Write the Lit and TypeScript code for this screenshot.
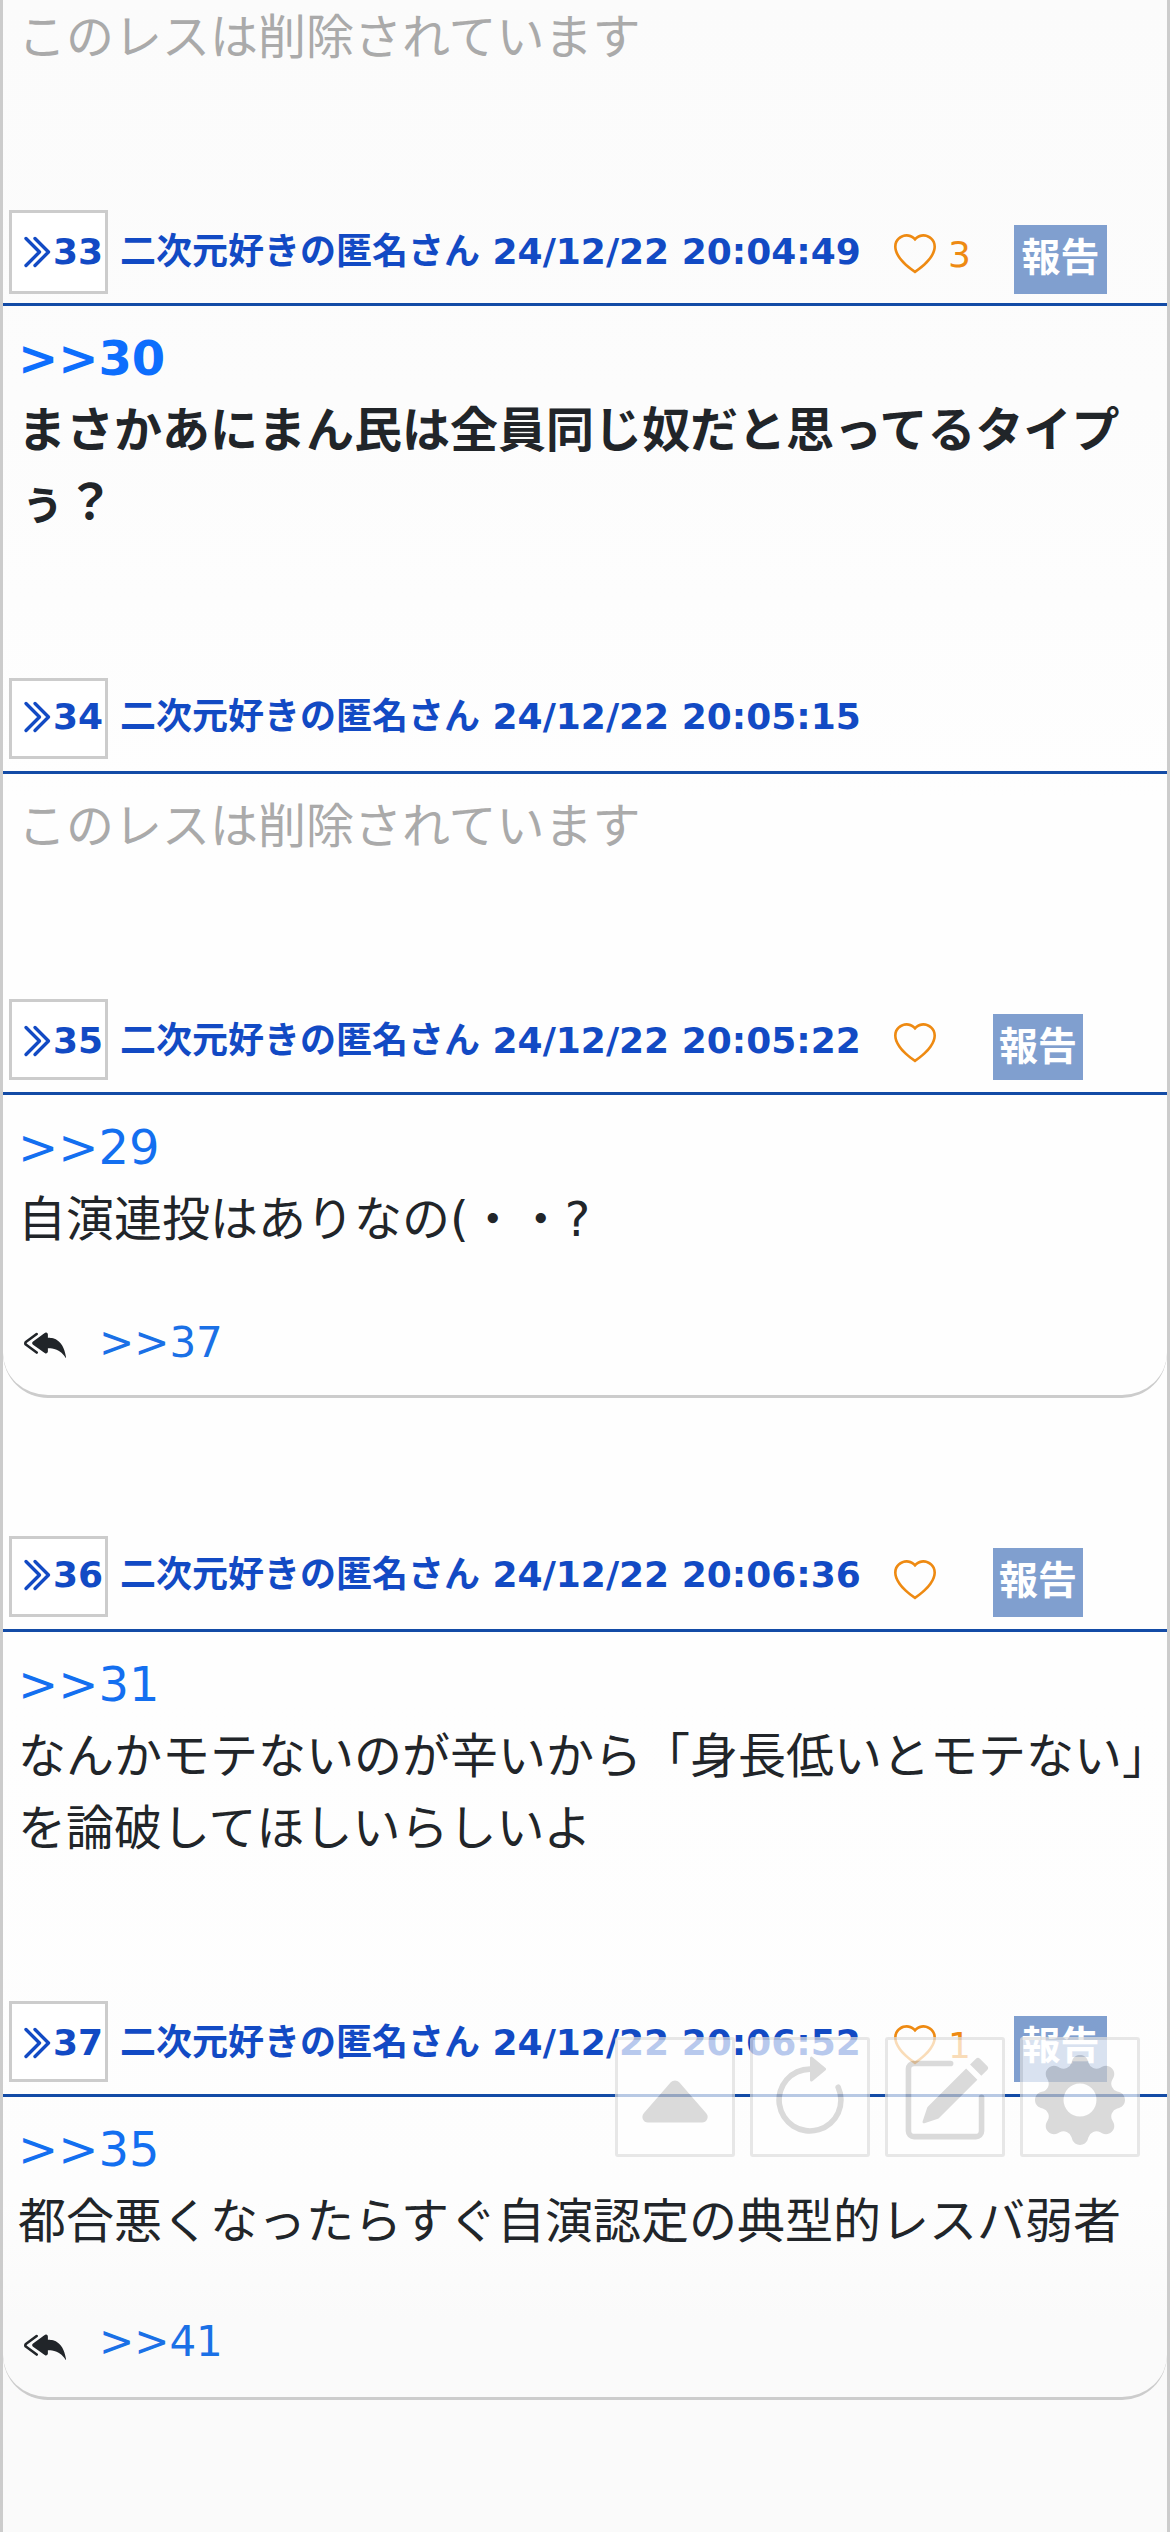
import { LitElement, html, css, svg, nothing } from "lit";
import { customElement, property } from "lit/decorators.js";
import { classMap } from "lit/directives/class-map.js";

interface Post {
  no?: number;
  time?: string;
  likes?: number;
  report?: boolean;
  bold?: boolean;
  deleted?: boolean;
  quote?: string;
  lines: string[];
  reply?: string;
  variant?: string;
}

const AUTHOR = "二次元好きの匿名さん";
const DELETED = "このレスは削除されています";

const POSTS: Post[] = [
  { deleted: true, lines: [DELETED], variant: "cut" },
  {
    no: 33,
    time: "24/12/22 20:04:49",
    likes: 3,
    report: true,
    bold: true,
    quote: ">>30",
    lines: ["まさかあにまん民は全員同じ奴だと思ってるタイプ", "ぅ？"],
    variant: "tall",
  },
  { no: 34, time: "24/12/22 20:05:15", deleted: true, lines: [DELETED], variant: "raised" },
  {
    no: 35,
    time: "24/12/22 20:05:22",
    likes: 0,
    report: true,
    quote: ">>29",
    lines: ["自演連投はありなの(・・?"],
    reply: ">>37",
    variant: "plain",
  },
  {
    no: 36,
    time: "24/12/22 20:06:36",
    likes: 0,
    report: true,
    quote: ">>31",
    lines: ["なんかモテないのが辛いから「身長低いとモテない」", "を論破してほしいらしいよ"],
    variant: "raised",
  },
  {
    no: 37,
    time: "24/12/22 20:06:52",
    likes: 1,
    report: true,
    quote: ">>35",
    lines: ["都合悪くなったらすぐ自演認定の典型的レスバ弱者"],
    reply: ">>41",
    variant: "snug",
  },
];

const chevrons = svg`<path d="M4 2l6 6-6 6M8 2l6 6-6 6" fill="none" stroke="currentColor" stroke-width="1.5" stroke-linecap="round" stroke-linejoin="round"/>`;
const heart = svg`<path d="m8 2.748-.717-.737C5.6.281 2.514.878 1.4 3.053c-.523 1.023-.641 2.5.314 4.385.92 1.815 2.834 3.989 6.286 6.357 3.452-2.368 5.365-4.542 6.286-6.357.955-1.886.838-3.362.314-4.385C13.486.878 10.4.28 8.717 2.01zM8 15C-7.333 4.868 3.279-3.04 7.824 1.143q.09.083.176.171a3 3 0 0 1 .176-.17C12.72-3.042 23.333 4.867 8 15"/>`;
const replyAll = svg`<path d="M8.021 11.9 3.453 8.62a.72.72 0 0 1 0-1.238L8.021 4.1a.716.716 0 0 1 1.079.619V6c1.5 0 6 0 7 8-2.5-4.5-7-4-7-4v1.281c0 .56-.606.898-1.079.62z"/><path d="M5.232 4.293a.5.5 0 0 1-.106.7L1.114 7.945l-.042.028a.147.147 0 0 0 0 .252l.042.028 4.012 2.954a.5.5 0 1 1-.593.805L.539 9.073a1.147 1.147 0 0 1 0-1.946l3.994-2.94a.5.5 0 0 1 .699.106"/>`;

const TOOLS = [
  svg`<path d="m7.247 4.86-4.796 5.481c-.566.647-.106 1.659.753 1.659h9.592a1 1 0 0 0 .753-1.659l-4.796-5.48a1 1 0 0 0-1.506 0z"/>`,
  svg`<path fill-rule="evenodd" d="M8 3a5 5 0 1 0 4.546 2.914.5.5 0 0 1 .908-.417A6 6 0 1 1 8 2z"/><path d="M8 4.466V.534a.25.25 0 0 1 .41-.192l2.36 1.966c.12.1.12.284 0 .384L8.41 4.658A.25.25 0 0 1 8 4.466"/>`,
  svg`<path d="M15.502 1.94a.5.5 0 0 1 0 .706L14.459 3.69l-2-2L13.502.646a.5.5 0 0 1 .707 0l1.293 1.293zm-1.75 2.456-2-2L4.939 9.21a.5.5 0 0 0-.121.196l-.805 2.414a.25.25 0 0 0 .316.316l2.414-.805a.5.5 0 0 0 .196-.12l6.813-6.814z"/><path fill-rule="evenodd" d="M1 13.5A1.5 1.5 0 0 0 2.5 15h11a1.5 1.5 0 0 0 1.5-1.5v-6a.5.5 0 0 0-1 0v6a.5.5 0 0 1-.5.5h-11a.5.5 0 0 1-.5-.5v-11a.5.5 0 0 1 .5-.5H9a.5.5 0 0 0 0-1H2.5A1.5 1.5 0 0 0 1 2.5z"/>`,
  svg`<path d="M9.405 1.05c-.413-1.4-2.397-1.4-2.81 0l-.1.34a1.464 1.464 0 0 1-2.105.872l-.31-.17c-1.283-.698-2.686.705-1.987 1.987l.169.311c.446.82.023 1.841-.872 2.105l-.34.1c-1.4.413-1.4 2.397 0 2.81l.34.1a1.464 1.464 0 0 1 .872 2.105l-.17.31c-.698 1.283.705 2.686 1.987 1.987l.311-.169a1.464 1.464 0 0 1 2.105.872l.1.34c.413 1.4 2.397 1.4 2.81 0l.1-.34a1.464 1.464 0 0 1 2.105-.872l.31.17c1.283.698 2.686-.705 1.987-1.987l-.169-.311a1.464 1.464 0 0 1 .872-2.105l.34-.1c1.4-.413 1.4-2.397 0-2.81l-.34-.1a1.464 1.464 0 0 1-.872-2.105l.17-.31c.698-1.283-.705-2.686-1.987-1.987l-.311.169a1.464 1.464 0 0 1-2.105-.872zM8 10.93a2.929 2.929 0 1 1 0-5.86 2.929 2.929 0 0 1 0 5.858z"/>`,
];

@customElement("thread-post")
export class ThreadPost extends LitElement {
  @property({ attribute: false }) post!: Post;

  static styles = css`
    :host { display: block; }
    .post { --gap: 137px; --text-top: 12px; --badge-top: 15px; --badge-pad: 6px; --box-h: 81px; padding-bottom: var(--gap); }
    .cut { margin-top: -15px; }
    .tall { --box-h: 84px; --gap: 140px; }
    .raised { --text-top: 9px; --badge-top: 12px; }
    .plain { --gap: 138px; }
    .snug { --badge-pad: 3px; }
    .head {
      display: flex; align-items: flex-start; box-sizing: border-box; height: 96px;
      padding-left: 6px; border-bottom: 3px solid #134ba6; color: #124ac4;
      font-size: 36px; font-weight: 700; line-height: 54px; white-space: nowrap;
    }
    .num {
      display: flex; box-sizing: border-box; width: 99px; height: var(--box-h);
      padding: var(--text-top) 0 0 5px; border: 3px solid #ccc; background: #fff;
    }
    .chev { flex: none; width: 36px; height: 36px; margin-top: 9px; }
    .meta { width: 774px; margin-left: 12px; padding-top: calc(var(--text-top) + 3px); }
    .like { display: flex; width: 99px; color: #ee8a12; font-weight: 400; }
    .heart { flex: none; width: 42px; height: 42px; margin-top: 24px; }
    .count { margin: 18px 0 0 12px; width: 45px; }
    .like.liked { width: 120px; }
    .badge {
      box-sizing: border-box; width: 90px; height: calc(var(--box-h) - var(--badge-top));
      margin-top: var(--badge-top); padding-top: var(--badge-pad); background: #809fcf;
      color: #fff; font-size: 39px; text-align: center;
    }
    .liked + .badge { width: 93px; }
    .body { padding: 16px 0 0 15px; color: #212529; font-size: 48px; line-height: 72px; white-space: nowrap; }
    .bold { font-weight: 700; }
    .deleted { color: #aaa; }
    .quote { color: #136ff0; }
    .bold .quote { color: #0d6efd; }
    .replies {
      display: flex; box-sizing: border-box; height: 143px; padding: 67px 0 0 21px;
      border-bottom: 3px solid #ccc; border-radius: 0 0 45px 45px; color: #212529;
    }
    .all { flex: none; width: 42px; height: 42px; }
    .link { margin-left: 33px; color: #1a70e6; font-size: 42px; line-height: 54px; margin-top: -6px; }
    .snug .link { margin-top: -9px; }
  `;

  private head(p: Post) {
    const liked = !!p.likes;
    return html`<div class="head">
      <div class="num"><svg class="chev" viewBox="0 0 16 16">${chevrons}</svg><span>${p.no}</span></div>
      <div class="meta">${AUTHOR} ${p.time}</div>
      ${p.report
        ? html`<div class=${classMap({ like: true, liked })}>
              <svg class="heart" viewBox="0 0 16 16" fill="currentColor">${heart}</svg>
              ${liked ? html`<span class="count">${p.likes}</span>` : nothing}
            </div>
            <div class="badge">報告</div>`
        : nothing}
    </div>`;
  }

  render() {
    const p = this.post;
    return html`<article class="post ${p.variant ?? ""}">
      ${p.no ? this.head(p) : nothing}
      <div class=${classMap({ body: true, bold: !!p.bold, deleted: !!p.deleted })}>
        ${p.quote ? html`<div class="quote">${p.quote}</div>` : nothing}
        ${p.lines.map((l) => html`<div>${l}</div>`)}
      </div>
      ${p.reply
        ? html`<div class="replies">
            <svg class="all" viewBox="0 0 16 16" fill="currentColor">${replyAll}</svg>
            <span class="link">${p.reply}</span>
          </div>`
        : nothing}
    </article>`;
  }
}

@customElement("app-root")
export class AppRoot extends LitElement {
  static styles = css`
    :host { display: block; }
    .page {
      position: relative; box-sizing: border-box; width: 1170px; height: 2532px; overflow: hidden;
      display: flow-root; border: solid #ccc; border-width: 0 3px;
      background: linear-gradient(#fbfbfb 0, #fcfcfc 400px, #fefefe 800px, #fefefe 1700px, #fdfdfd 2200px, #fafafa 2320px);
      font-family: "DejaVu Sans", "Noto Sans CJK JP", sans-serif;
    }
    .tools { position: absolute; left: 612px; top: 2037px; display: flex; gap: 15px; opacity: 0.7; }
    .tool {
      box-sizing: border-box; width: 120px; height: 120px; padding: 15px 12px 0;
      border: 3px solid #dedede; border-radius: 3px; background: #fff; color: #ccc;
    }
    .glyph { display: block; width: 90px; height: 90px; }
  `;

  render() {
    return html`<main class="page">
      ${POSTS.map((p) => html`<thread-post .post=${p}></thread-post>`)}
      <nav class="tools">
        ${TOOLS.map((t) => html`<div class="tool"><svg class="glyph" viewBox="0 0 16 16" fill="currentColor">${t}</svg></div>`)}
      </nav>
    </main>`;
  }
}
